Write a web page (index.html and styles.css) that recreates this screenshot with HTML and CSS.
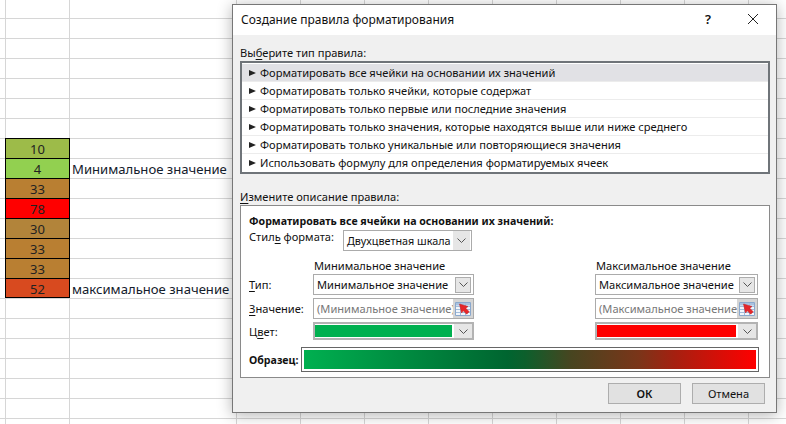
FILE: index.html
```html
<!DOCTYPE html>
<html>
<head>
  <title>Создание правила форматирования</title>
  <link rel="stylesheet" href="styles.css">
</head>
<body>

  <!-- Sheet behind the dialog -->
  <div class="sheet">
    <div class="data">
      <div class="cell c-10">10</div><div class="note"></div>
      <div class="cell c-4">4</div><div class="note">Минимальное значение</div>
      <div class="cell c-33">33</div><div class="note"></div>
      <div class="cell c-78">78</div><div class="note"></div>
      <div class="cell c-30">30</div><div class="note"></div>
      <div class="cell c-33">33</div><div class="note"></div>
      <div class="cell c-33">33</div><div class="note"></div>
      <div class="cell c-52">52</div><div class="note">максимальное значение</div>
    </div>
  </div>

  <!-- Dialog -->
  <div class="dialog">
    <div class="titlebar">
      <span class="title">Создание правила форматирования</span>
      <span class="help">?</span>
      <svg class="close" width="12" height="12" viewBox="0 0 12 12"><path d="M1 1l10 10M11 1L1 11" stroke="#222" stroke-width="1" fill="none"/></svg>
    </div>

    <div class="dialog-body">
      <div class="group-label">Вы<u>б</u>ерите тип правила:</div>
      <div class="rule-list">
        <div class="rule selected"><i class="arrow"></i>Форматировать все ячейки на основании их значений</div>
        <div class="rule"><i class="arrow"></i>Форматировать только ячейки, которые содержат</div>
        <div class="rule"><i class="arrow"></i>Форматировать только первые или последние значения</div>
        <div class="rule"><i class="arrow"></i>Форматировать только значения, которые находятся выше или ниже среднего</div>
        <div class="rule"><i class="arrow"></i>Форматировать только уникальные или повторяющиеся значения</div>
        <div class="rule"><i class="arrow"></i>Использовать формулу для определения форматируемых ячеек</div>
      </div>

      <div class="group-label second"><u>И</u>змените описание правила:</div>
      <div class="rule-box">
        <div class="box-title">Форматировать все ячейки на основании их значений:</div>
        <div class="style-row">
          <span class="style-label">Стил<u>ь</u> формата:</span>
          <div class="combo style-combo">
            <span class="combo-text">Двухцветная шкала</span>
            <span class="drop"><svg width="9" height="5" viewBox="0 0 9 5"><path d="M.5.5l4 4 4-4" stroke="#555" fill="none"/></svg></span>
          </div>
        </div>

        <div class="scale-grid">
          <span></span>
          <span class="col-head">Минимальное значение</span>
          <span></span>
          <span class="col-head">Максимальное значение</span>

          <span class="row-label"><u>Т</u>ип:</span>
          <div class="combo">
            <span class="combo-text">Минимальное значение</span>
            <span class="drop"><svg width="9" height="5" viewBox="0 0 9 5"><path d="M.5.5l4 4 4-4" stroke="#555" fill="none"/></svg></span>
          </div>
          <span></span>
          <div class="combo">
            <span class="combo-text">Максимальное значение</span>
            <span class="drop"><svg width="9" height="5" viewBox="0 0 9 5"><path d="M.5.5l4 4 4-4" stroke="#555" fill="none"/></svg></span>
          </div>

          <span class="row-label"><u>З</u>начение:</span>
          <div class="combo value-input">
            <span class="combo-text muted">(Минимальное значение)</span>
            <span class="picker"><svg width="16" height="14" viewBox="0 0 16 14"><path d="M.5.5h15v13H.5z" fill="#f2f6fb" stroke="#8aa8cd"/><path d="M1 1h14v2.500H1z" fill="#a9c2e0"/><path d="M1 4.500h14M1 7.500h14M1 10.500h14M5.500 1v12M10.500 1v12" stroke="#a3bcda"/><path d="M4.500 2l8.500 2.500-2.200 1.800 3.400 3.400-2.500 2.500-3.400-3.400-1.800 2.200z" fill="#e5262a" stroke="#c21f1f" stroke-width=".5"/></svg></span>
          </div>
          <span></span>
          <div class="combo value-input">
            <span class="combo-text muted">(Максимальное значение)</span>
            <span class="picker"><svg width="16" height="14" viewBox="0 0 16 14"><path d="M.5.5h15v13H.5z" fill="#f2f6fb" stroke="#8aa8cd"/><path d="M1 1h14v2.500H1z" fill="#a9c2e0"/><path d="M1 4.500h14M1 7.500h14M1 10.500h14M5.500 1v12M10.500 1v12" stroke="#a3bcda"/><path d="M4.500 2l8.500 2.500-2.200 1.800 3.400 3.400-2.500 2.500-3.400-3.400-1.800 2.200z" fill="#e5262a" stroke="#c21f1f" stroke-width=".5"/></svg></span>
          </div>

          <span class="row-label">Ц<u>в</u>ет:</span>
          <div class="combo color-combo">
            <span class="swatch green"></span>
            <span class="drop flat"><svg width="9" height="5" viewBox="0 0 9 5"><path d="M.5.5l4 4 4-4" stroke="#555" fill="none"/></svg></span>
          </div>
          <span></span>
          <div class="combo color-combo">
            <span class="swatch red"></span>
            <span class="drop flat"><svg width="9" height="5" viewBox="0 0 9 5"><path d="M.5.5l4 4 4-4" stroke="#555" fill="none"/></svg></span>
          </div>
        </div>

        <div class="sample-row">
          <b class="sample-label">Образец:</b>
          <div class="sample"><div class="sample-fill"></div></div>
        </div>
      </div>

      <div class="buttons">
        <button class="btn default">ОК</button>
        <button class="btn">Отмена</button>
      </div>
    </div>
  </div>

</body>
</html>
```

FILE: styles.css
```css
:root {
  --grid: #d6d6d6;
  --dialog: #f0f0f0;
  --field: #ababab;
}

html, body {
  margin: 0;
  padding: 0;
  height: 100%;
  overflow: hidden;
}

body {
  font-family: "Noto Sans", "Open Sans", sans-serif;
  background: #fff;
  color: #111;
}

u {
  text-underline-offset: 2px;
}

/* sheet */
.sheet {
  height: 424px;
  padding-top: 138px;
  box-sizing: border-box;
  background-image:
    repeating-linear-gradient(to bottom, transparent 0, transparent 19px, var(--grid) 19px, var(--grid) 20px),
    linear-gradient(to right, transparent 5px, var(--grid) 5px, var(--grid) 6px, transparent 6px),
    linear-gradient(to right, transparent 69px, var(--grid) 69px, var(--grid) 70px, transparent 70px),
    repeating-linear-gradient(to right, var(--grid) 0, var(--grid) 1px, transparent 1px, transparent 64px);
  background-position: 0 -1px, 0 0, 0 0, 236px 0;
  background-size: auto, auto, auto, 550px 100%;
  background-repeat: repeat, no-repeat, no-repeat, no-repeat;
}

.data {
  display: grid;
  grid-template-columns: 65px 165px;
  grid-auto-rows: 20px;
  margin-left: 5px;
  font-size: 13px;
  line-height: 21px;
}

.cell {
  border: 1px solid #000;
  border-bottom: 0;
  text-align: center;
  color: #222;
}

.cell.c-52 {
  border-bottom: 1px solid #000;
}

.c-10 { background: #9dbb49; }
.c-4 { background: #92d050; }
.c-33 { background: #b97f32; }
.c-78 { background: #ff0000; }
.c-30 { background: #b2843a; }
.c-52 { background: #d84a1f; }

.note {
  padding-left: 2px;
  font-size: 13.1px;
  line-height: 23px;
  white-space: nowrap;
  color: #14202c;
}

/* dialog */
.dialog {
  position: absolute;
  left: 232px;
  top: 4px;
  width: 545px;
  height: 409px;
  box-sizing: border-box;
  border: 1px solid #777;
  background: var(--dialog);
  box-shadow: 0 2px 14px rgba(0, 0, 0, 0.3);
  font-size: 11.1px;
}

.titlebar {
  height: 30px;
  background: #fff;
  display: flex;
  align-items: center;
  padding: 0 17px 2px 8px;
  box-sizing: border-box;
}

.title {
  flex: 1;
  font-size: 12px;
}

.help {
  font-size: 13px;
  font-weight: 600;
  margin-right: 36px;
}

.dialog-body {
  padding: 0 6px 0 7px;
}

.group-label {
  margin-top: 9px;
  height: 17px;
  line-height: 17px;
}

.group-label.second {
  margin-top: 14px;
}

.rule-list {
  height: 113px;
  box-sizing: border-box;
  border: 2px solid #6f7479;
  padding: 1px 0;
  background: #fff;
}

.rule {
  height: 18px;
  line-height: 18px;
  box-sizing: border-box;
  border-bottom: 1px solid #ececec;
  padding-left: 7px;
  white-space: nowrap;
}

.rule:last-child {
  border-bottom: 0;
}

.rule.selected {
  background: #e1e1e5;
}

.arrow {
  display: inline-block;
  width: 0;
  height: 0;
  border-left: 7px solid #222;
  border-top: 3px solid transparent;
  border-bottom: 3px solid transparent;
  margin-right: 4px;
  vertical-align: 1px;
}

.rule-box {
  height: 173px;
  box-sizing: border-box;
  border: 1px solid #8a8a8a;
  background: #fff;
  padding: 7px 8px 0;
}

.box-title {
  font-weight: 700;
  font-size: 10.6px;
  height: 17px;
  line-height: 17px;
}

.style-row {
  display: flex;
  align-items: flex-start;
}

.style-label {
  width: 94px;
  line-height: 14px;
}

.combo {
  display: flex;
  height: 21px;
  box-sizing: border-box;
  border: 1px solid var(--field);
  background: #fff;
  align-items: center;
}

.style-combo {
  width: 129px;
  font-size: 10.8px;
}

.style-combo .drop {
  width: 17px;
  height: 19px;
  margin-right: 1px;
  border: 0;
}

.combo-text {
  flex: 1;
  min-width: 0;
  padding-left: 3px;
  white-space: nowrap;
  overflow: hidden;
}

.muted {
  color: #777;
}

.drop {
  width: 16px;
  height: 16px;
  box-sizing: border-box;
  flex: none;
  margin-right: 2px;
  display: flex;
  align-items: center;
  justify-content: center;
  background: #e6e6e6;
  border: 1px solid #adadad;
}

.drop.flat {
  height: 100%;
  margin: 0;
  border: 0;
  width: 18px;
}

.scale-grid {
  display: grid;
  grid-template-columns: 64px 161px 121px 163px;
  grid-template-rows: 14px 21px 21px 18px;
  row-gap: 3px;
  margin-top: 6px;
  align-items: center;
}

.col-head {
  align-self: start;
  line-height: 17px;
  padding-left: 1px;
  white-space: nowrap;
}

.row-label {
  line-height: 17px;
}

.value-input {
  background: #fff;
}

.picker {
  width: 20px;
  height: 100%;
  flex: none;
  background: #d5d5d5;
  display: flex;
  align-items: center;
  justify-content: center;
}

.color-combo {
  height: 18px;
  border-width: 2px;
  border-color: #b3b3b3;
}

.swatch {
  flex: 1;
  height: 12px;
  margin-right: 2px;
}

.swatch.green { background: #00b050; }
.swatch.red { background: #ff0000; }

.sample-row {
  display: flex;
  align-items: center;
  margin-top: 7px;
}

.sample-label {
  width: 52px;
  font-size: 10.6px;
}

.sample {
  width: 458px;
  height: 25px;
  box-sizing: border-box;
  border: 1px solid #666;
  padding: 2px;
}

.sample-fill {
  height: 100%;
  background: linear-gradient(to right, #00b050 0%, #006530 45%, #0d5f2c 49%, #474520 59%, #7a3519 74%, #a52010 82%, #ff0000 100%);
}

.buttons {
  display: flex;
  justify-content: flex-end;
  gap: 11px;
  margin-top: 5px;
  padding-right: 5px;
}

.btn {
  width: 73px;
  height: 21px;
  padding: 0;
  border: 1px solid #adadad;
  background: #e1e1e1;
  font: inherit;
  color: #111;
}

.btn.default {
  font-weight: 600;
}
```
